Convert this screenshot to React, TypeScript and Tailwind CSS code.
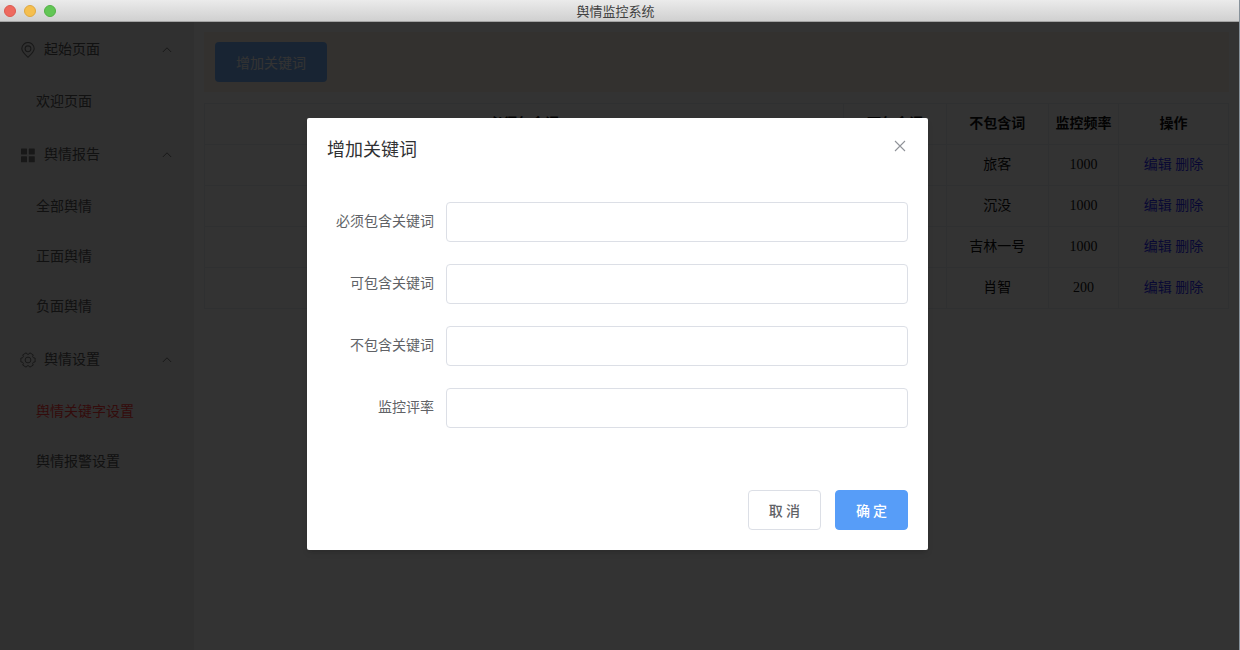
import type { ReactNode } from "react";

const LocationIcon = () => (
  <svg viewBox="0 0 16 16" className="size-4" fill="none" stroke="currentColor" strokeWidth="1.1" aria-hidden="true">
    <path d="M8 15.3C4.6 12 1.8 9.6 1.8 6.7a6.2 6.2 0 0 1 12.4 0c0 2.900-2.800 5.300-6.200 8.600Z" strokeLinejoin="round" />
    <circle cx="8" cy="6.800" r="2.900" />
  </svg>
);

const MenuIcon = () => (
  <svg viewBox="0 0 16 16" className="size-4" fill="currentColor" aria-hidden="true">
    <rect x="1" y="1.500" width="6" height="6" rx="0.400" />
    <rect x="8.800" y="1.500" width="6" height="6" rx="0.400" />
    <rect x="1" y="9.300" width="6" height="6" rx="0.400" />
    <rect x="8.800" y="9.300" width="6" height="6" rx="0.400" />
  </svg>
);

const SettingIcon = () => (
  <svg viewBox="0 0 16 16" className="size-4" fill="none" stroke="currentColor" strokeWidth="1" strokeLinejoin="round" aria-hidden="true">
    <path d="M15.1 6V10L13.5 10.1 12.6 11.7 13.3 13.1 9.8 15.2 8.9 13.8H7.1L6.2 15.2 2.7 13.1 3.4 11.7 2.5 10.1 0.9 10V6L2.5 5.9 3.4 4.3 2.7 2.9 6.2 0.8 7.1 2.2H8.9L9.8 0.8 13.3 2.9 12.6 4.3 13.5 5.9Z" />
    <circle cx="8" cy="8" r="2.9" />
  </svg>
);

const ArrowUp = () => (
  <svg viewBox="0 0 10 10" className="size-2.5" fill="none" stroke="#777777" strokeWidth="1" aria-hidden="true">
    <path d="M0.800 7 5 2.800 9.200 7" />
  </svg>
);

type Group = { title: string; icon: ReactNode; items: string[] };

const groups: Group[] = [
  { title: "起始页面", icon: <LocationIcon />, items: ["欢迎页面"] },
  { title: "舆情报告", icon: <MenuIcon />, items: ["全部舆情", "正面舆情", "负面舆情"] },
  { title: "舆情设置", icon: <SettingIcon />, items: ["舆情关键字设置", "舆情报警设置"] },
];

const activeItem = "舆情关键字设置";

const rows = [
  { excluded: "旅客", rate: 1000 },
  { excluded: "沉没", rate: 1000 },
  { excluded: "吉林一号", rate: 1000 },
  { excluded: "肖智", rate: 200 },
];

const fields = [
  { id: "must", label: "必须包含关键词" },
  { id: "may", label: "可包含关键词" },
  { id: "not", label: "不包含关键词" },
  { id: "rate", label: "监控评率" },
];

function TitleBar() {
  return (
    <header className="relative flex h-[22px] items-center justify-center border-b border-[#a3a3a3] bg-linear-to-b from-[#ebebeb] to-[#d0d0d0]">
      <div className="absolute left-1 flex gap-2">
        <span className="size-3 rounded-full border border-[#dc5a50] bg-[#ee6a5f]" />
        <span className="size-3 rounded-full border border-[#dfa940] bg-[#f5bf4f]" />
        <span className="size-3 rounded-full border border-[#53b146] bg-[#62c655]" />
      </div>
      <h1 className="pr-2 font-['Noto_Sans_CJK_SC',sans-serif] text-[13px] leading-5 text-[#404040]">舆情监控系统</h1>
    </header>
  );
}

function Sidebar() {
  return (
    <nav className="w-[194px] shrink-0 bg-[#f0f0f0] text-[#555555]">
      {groups.map((group) => (
        <section key={group.title}>
          <button type="button" className="flex h-[55px] w-full items-center pr-[22px] pl-5">
            <span className="text-[#777777]">{group.icon}</span>
            <span className="ml-2 flex-1 text-left">{group.title}</span>
            <ArrowUp />
          </button>
          <ul>
            {group.items.map((item) => (
              <li key={item}>
                <a
                  href="#"
                  className={
                    item === activeItem
                      ? "flex h-[50px] items-center pl-9 text-[#ff3c3c]"
                      : "flex h-[50px] items-center pl-9"
                  }
                >
                  {item}
                </a>
              </li>
            ))}
          </ul>
        </section>
      ))}
    </nav>
  );
}

function KeywordTable() {
  const cell = "border border-[#ebeef5] text-center";
  return (
    <table className="mt-[11px] w-full table-fixed border-collapse text-[#111111]">
      <colgroup>
        <col />
        <col className="w-[10%]" />
        <col className="w-[10%]" />
        <col className="w-[70px]" />
        <col className="w-[110px]" />
      </colgroup>
      <thead>
        <tr className="h-[41px]">
          {["必须包含词", "可包含词", "不包含词", "监控频率", "操作"].map((name) => (
            <th key={name} scope="col" className={`${cell} font-bold`}>
              {name}
            </th>
          ))}
        </tr>
      </thead>
      <tbody>
        {rows.map((row) => (
          <tr key={row.excluded} className="h-[41px]">
            <td className={cell} />
            <td className={cell} />
            <td className={cell}>{row.excluded}</td>
            <td className={cell}>{row.rate}</td>
            <td className={cell}>
              <a href="#" className="text-[#3030ff]">编辑</a>{" "}
              <a href="#" className="text-[#3030ff]">删除</a>
            </td>
          </tr>
        ))}
      </tbody>
    </table>
  );
}

function KeywordDialog() {
  return (
    <div
      role="dialog"
      aria-modal="true"
      aria-labelledby="dialog-title"
      className="w-[50.3%] rounded-xs bg-white px-5 pt-5 pb-5 shadow-md"
    >
      <div className="flex items-start justify-between">
        <h2 id="dialog-title" className="text-lg leading-6 text-[#303133]">增加关键词</h2>
        <button type="button" aria-label="关闭" className="flex size-4 items-center justify-center text-[#909399]">
          <svg viewBox="0 0 12 12" className="size-3" fill="none" stroke="currentColor" strokeWidth="1.1" aria-hidden="true">
            <path d="M1 1 11 11M11 1 1 11" />
          </svg>
        </button>
      </div>
      <form className="mt-10 flex flex-col gap-[22px]">
        {fields.map((field) => (
          <div key={field.id} className="flex items-center gap-3">
            <label htmlFor={field.id} className="w-[107px] shrink-0 text-right text-[#606266]">
              {field.label}
            </label>
            <input
              id={field.id}
              type="text"
              className="h-10 min-w-0 flex-1 rounded-sm border border-[#dcdfe6] bg-white px-[15px] outline-none"
            />
          </div>
        ))}
      </form>
      <div className="mt-[62px] flex justify-end gap-[14px] font-['Noto_Sans_CJK_SC',sans-serif] font-medium">
        <button type="button" className="h-10 rounded-sm border border-[#dcdfe6] bg-white px-5 text-[#606266]">
          取 消
        </button>
        <button type="button" className="h-10 rounded-sm border border-[#579df8] bg-[#579df8] px-5 text-white">
          确 定
        </button>
      </div>
    </div>
  );
}

export default function App() {
  return (
    <div className="flex min-h-screen flex-col border-r border-[#87929b] font-['Liberation_Serif','Noto_Sans_CJK_SC',serif] text-sm">
      <TitleBar />
      <div className="relative flex flex-1 bg-white">
        <Sidebar />
        <main className="min-w-0 flex-1 p-[10px]">
          <div className="bg-[#fff6ea] px-[11px] py-[10px]">
            <button
              type="button"
              className="h-10 rounded-sm bg-[#78b4ff] px-[21px] font-['Noto_Sans_CJK_SC',sans-serif] text-white"
            >
              增加关键词
            </button>
          </div>
          <KeywordTable />
        </main>
        <div className="absolute inset-0 flex items-start justify-center bg-black/80 pt-24 pr-1">
          <KeywordDialog />
        </div>
      </div>
    </div>
  );
}
